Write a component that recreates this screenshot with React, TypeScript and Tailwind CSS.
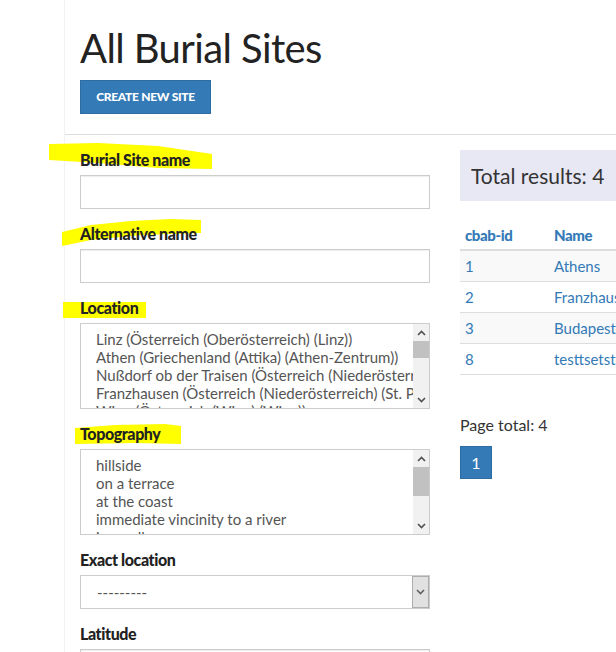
import React from "react";

const Chevron = ({ dir, color = "#505050" }: { dir: "up" | "down"; color?: string }) => (
  <svg width="9" height="6" viewBox="0 0 9 6">
    <path
      d={dir === "up" ? "M1 5 L4.5 1.5 L8 5" : "M1 1 L4.5 4.5 L8 1"}
      fill="none"
      stroke={color}
      strokeWidth="1.6"
    />
  </svg>
);

const Scrollbar = ({ thumbH }: { thumbH: number }) => (
  <div className="w-[16px] shrink-0 bg-[#f1f1f1] flex flex-col">
    <div className="h-[17px] flex items-center justify-center">
      <Chevron dir="up" />
    </div>
    <div className="flex-1">
      <div className="bg-[#c1c1c1] w-full" style={{ height: thumbH }} />
    </div>
    <div className="h-[17px] flex items-center justify-center">
      <Chevron dir="down" />
    </div>
  </div>
);

const Highlight = ({
  left,
  top,
  w,
  h,
  d,
}: {
  left: number;
  top: number;
  w: number;
  h: number;
  d: string;
}) => (
  <svg
    className="absolute pointer-events-none"
    style={{ left, top }}
    width={w}
    height={h}
    viewBox={`0 0 ${w} ${h}`}
  >
    <path d={d} fill="#ffff00" />
  </svg>
);

const Label = ({ children, hl }: { children: React.ReactNode; hl?: React.ReactNode }) => (
  <div className="relative h-[20px] mb-[5px]">
    {hl}
    <span className="relative top-[-2px] text-[16px] leading-[20px] font-black text-[#222] tracking-[-0.4px]">
      {children}
    </span>
  </div>
);

const TextInput = () => (
  <div className="h-[34px] w-[350px] border border-[#ccc] bg-white shadow-[inset_0_1px_1px_rgba(0,0,0,0.075)]" />
);

const MultiSelect = ({ items, thumbH }: { items: string[]; thumbH: number }) => (
  <div className="h-[86px] w-[350px] border border-[#ccc] bg-white flex">
    <div className="flex-1 overflow-hidden pl-[15px] pt-[6px] whitespace-nowrap">
      {items.map((t) => (
        <div key={t} className="text-[15px] leading-[18px] text-[#555]">
          {t}
        </div>
      ))}
    </div>
    <Scrollbar thumbH={thumbH} />
  </div>
);

export default function App() {
  return (
    <div className="w-[616px] h-[652px] overflow-hidden bg-white font-['Lato',sans-serif] flex">
      <div className="w-[64px] shrink-0" />
      <div className="flex-1 border-l border-[#f2f2f2] min-w-0">
        <div className="pl-[15px] pt-[27px] pb-[20px]">
          <h1 className="text-[40px] leading-[43px] text-[#222] tracking-[-0.6px] font-normal">
            All Burial Sites
          </h1>
          <div className="mt-[10px] h-[34px] w-[131px] bg-[#337ab7] border border-[#2e6da4] flex items-center justify-center">
            <span className="text-white text-[12px] font-black tracking-[-0.3px]">CREATE NEW SITE</span>
          </div>
        </div>
        <div className="border-t border-[#ddd]" />
        <div className="flex pl-[15px] pt-[15px] gap-[30px]">
          <div className="w-[350px] shrink-0">
            <div className="mb-[15px]">
              <Label
                hl={
                  <Highlight
                    left={-32}
                    top={-7}
                    w={166}
                    h={28}
                    d="M1 1 L50 0 L110 3 L164 11 L164 26 L110 25 L50 20 L1 17 Z"
                  />
                }
              >
                Burial Site name
              </Label>
              <TextInput />
            </div>
            <div className="mb-[15px]">
              <Label
                hl={
                  <Highlight
                    left={-19}
                    top={-6}
                    w={141}
                    h={29}
                    d="M1 14 L30 7 L70 3 L110 1 L140 2 L140 15 L80 17 L30 22 L1 28 Z"
                  />
                }
              >
                Alternative name
              </Label>
              <TextInput />
            </div>
            <div className="mb-[15px]">
              <Label hl={<Highlight left={-17} top={4} w={83} h={16} d="M0 0 L83 0 L83 16 L0 16 Z" />}>
                Location
              </Label>
              <MultiSelect
                thumbH={17}
                items={[
                  "Linz (Österreich (Oberösterreich) (Linz))",
                  "Athen (Griechenland (Attika) (Athen-Zentrum))",
                  "Nußdorf ob der Traisen (Österreich (Niederösterreich))",
                  "Franzhausen (Österreich (Niederösterreich) (St. Pölten))",
                  "Wien (Österreich (Wien) (Wien))",
                ]}
              />
            </div>
            <div className="mb-[15px]">
              <Label
                hl={
                  <Highlight
                    left={-5}
                    top={0}
                    w={107}
                    h={21}
                    d="M0 4 L40 1 L90 0 L106 2 L106 20 L60 19 L0 20 Z"
                  />
                }
              >
                Topography
              </Label>
              <MultiSelect
                thumbH={29}
                items={[
                  "hillside",
                  "on a terrace",
                  "at the coast",
                  "immediate vincinity to a river",
                  "in a valley",
                ]}
              />
            </div>
            <div className="mb-[15px]">
              <Label>Exact location</Label>
              <div className="h-[34px] w-[350px] border border-[#ccc] bg-white flex">
                <div className="flex-1 pl-[16px] flex items-center text-[15px] text-[#555]">---------</div>
                <div className="w-[17px] shrink-0 bg-[#e1e1e1] border border-[#adadad] flex items-center justify-center">
                  <Chevron dir="down" color="#606060" />
                </div>
              </div>
            </div>
            <div className="mb-[15px]">
              <Label>Latitude</Label>
              <TextInput />
            </div>
          </div>
          <div className="w-[420px] shrink-0">
            <div className="h-[51px] bg-[#e8e8f5] pl-[11px] flex items-center">
              <span className="text-[21px] text-[#333]">Total results: 4</span>
            </div>
            <div className="mt-[20px] text-[15px] text-[#337ab7]">
              <div className="flex h-[30px] items-center border-b-2 border-[#ddd] font-black tracking-[-0.4px]">
                <div className="w-[94px] pl-[5px]">cbab-id</div>
                <div className="flex-1">Name</div>
              </div>
              {[
                ["1", "Athens"],
                ["2", "Franzhausen"],
                ["3", "Budapest"],
                ["8", "testtsetstest"],
              ].map(([id, name], i) => (
                <div
                  key={id}
                  className={`flex h-[31px] items-center border-b border-[#ddd] ${
                    i % 2 === 0 ? "bg-[#f9f9f9]" : "bg-white"
                  }`}
                >
                  <div className="w-[94px] pl-[5px]">{id}</div>
                  <div className="flex-1 whitespace-nowrap">{name}</div>
                </div>
              ))}
            </div>
            <div className="mt-[40px] text-[16px] leading-[20px] text-[#333]">Page total: 4</div>
            <div className="mt-[11px] w-[32px] h-[33px] bg-[#337ab7] border border-[#2e6da4] flex items-center justify-center text-white text-[16px]">
              1
            </div>
          </div>
        </div>
      </div>
    </div>
  );
}
